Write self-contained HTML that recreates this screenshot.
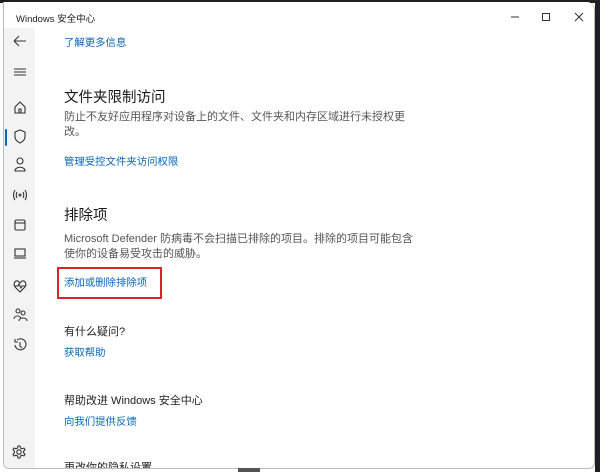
<!DOCTYPE html>
<html><head><meta charset="utf-8"><style>
*{margin:0;padding:0;box-sizing:border-box}
body{width:600px;height:472px;background:#fff;position:relative;overflow:hidden;font-family:"Liberation Sans","Noto Sans CJK SC",sans-serif;color:#1a1a1a}
.win{position:absolute;left:3px;top:2px;width:592px;height:467px;background:#fff;border:1px solid #bbb;border-top:none;border-radius:0 8px 6px 6px;overflow:hidden}
.topbar{position:absolute;left:0;top:0;width:600px;height:3px;background:#202020}
.rb{position:absolute;right:0;top:0;width:5px;height:472px;background:#1e1e24}
.side{position:absolute;left:0;top:26px;width:31px;height:441px;background:#f3f3f3}
.t{position:absolute;white-space:nowrap}
.title{left:12px;top:9px;font-size:9.5px;color:#222}
.h{font-size:14.5px;color:#1a1a1a}
.b{font-size:11px;color:#555}
.l{font-size:10.4px;color:#0a66b8}
.q{font-size:11px;color:#222}
svg{position:absolute}
</style></head><body>
<div class="topbar"></div>
<div class="win">
<div class="side"></div>
<div class="t title">Windows 安全中心</div>
<svg style="left:500px;top:8px" width="90" height="14" viewBox="0 0 90 14" fill="none" stroke="#333" stroke-width="1"><line x1="7" y1="7" x2="15" y2="7"/><rect x="38.5" y="3.5" width="7" height="7"/><path d="M71 3 L79 11 M79 3 L71 11"/></svg>
<svg style="left:6px;top:29px" width="20" height="330" viewBox="0 0 20 330" fill="none" stroke="#333" stroke-width="1.1">
<path d="M4 10 H16 M4 10 L9 5 M4 10 L9 15"/>
<path d="M4 38 H16 M4 41 H16 M4 44 H16"/>
<path d="M5 76 L10 71 L15 76 V82 H5 Z M9 82 V78 H11 V82"/>
<path d="M10 99 L15 101 V106 C15 109 12 111 10 112 C8 111 5 109 5 106 V101 Z"/>
<circle cx="10" cy="130" r="3"/><path d="M5 140 C5 135 15 135 15 140 Z"/>
<circle cx="10" cy="164" r="1"/><path d="M7 161 C6 163 6 165 7 167 M13 161 C14 163 14 165 13 167 M5 159 C3 162 3 166 5 169 M15 159 C17 162 17 166 15 169"/>
<rect x="5" y="189" width="10" height="10" rx="1.5"/><path d="M5 192 H15"/>
<rect x="5" y="218" width="10" height="7"/><path d="M4 227 H16"/>
<path d="M10 261 L5 256 C3 253 5 249 8 250 L10 252 L12 250 C15 249 17 253 15 256 Z M5 255 H8 L9 253 L11 257 L12 255 H15"/>
<circle cx="8" cy="280" r="2"/><circle cx="13" cy="282" r="2"/><path d="M4 288 C4 284 11 284 11 288 M9 290 C9 286 17 286 17 290"/>
<path d="M5 314 A5.5 5.5 0 1 0 7 309 M5 308 V311 H8 M10 311 V315 L12 317"/>
</svg>
<div style="position:absolute;left:1px;top:127px;width:2px;height:17px;background:#0a66b8;border-radius:1px"></div>
<svg style="left:7px;top:442px" width="16" height="16" viewBox="0 0 16 16" fill="none" stroke="#333" stroke-width="1.1"><circle cx="8" cy="8" r="2.2"/><path d="M7 2 H9 L9.5 4 L11 4.8 L13 4 L14 5.7 L12.6 7.2 V8.8 L14 10.3 L13 12 L11 11.2 L9.5 12 L9 14 H7 L6.5 12 L5 11.2 L3 12 L2 10.3 L3.4 8.8 V7.2 L2 5.7 L3 4 L5 4.8 L6.5 4 Z"/></svg>

<div class="t l" style="left:60px;top:32px">了解更多信息</div>
<div class="t h" style="left:60px;top:84px">文件夹限制访问</div>
<div class="t b" style="left:60px;top:106px">防止不友好应用程序对设备上的文件、文件夹和内存区域进行未授权更</div>
<div class="t b" style="left:60px;top:121px">改。</div>
<div class="t l" style="left:60px;top:151px">管理受控文件夹访问权限</div>
<div class="t h" style="left:60px;top:202px">排除项</div>
<div class="t b" style="left:60px;top:228px">Microsoft Defender 防病毒不会扫描已排除的项目。排除的项目可能包含</div>
<div class="t b" style="left:60px;top:243px">使你的设备易受攻击的威胁。</div>
<div class="t l" style="left:60px;top:272px">添加或删除排除项</div>
<div style="position:absolute;left:53px;top:265px;width:105px;height:32px;border:2px solid #d9232a"></div>
<div class="t q" style="left:60px;top:321px">有什么疑问?</div>
<div class="t l" style="left:60px;top:342px">获取帮助</div>
<div class="t q" style="left:60px;top:390px">帮助改进 Windows 安全中心</div>
<div class="t l" style="left:60px;top:411px">向我们提供反馈</div>
<div class="t q" style="left:60px;top:457px">更改你的隐私设置</div>
</div>
<div class="rb"></div>
<div style="position:absolute;left:238px;top:468px;width:22px;height:4px;background:#555"></div>
</body></html>
